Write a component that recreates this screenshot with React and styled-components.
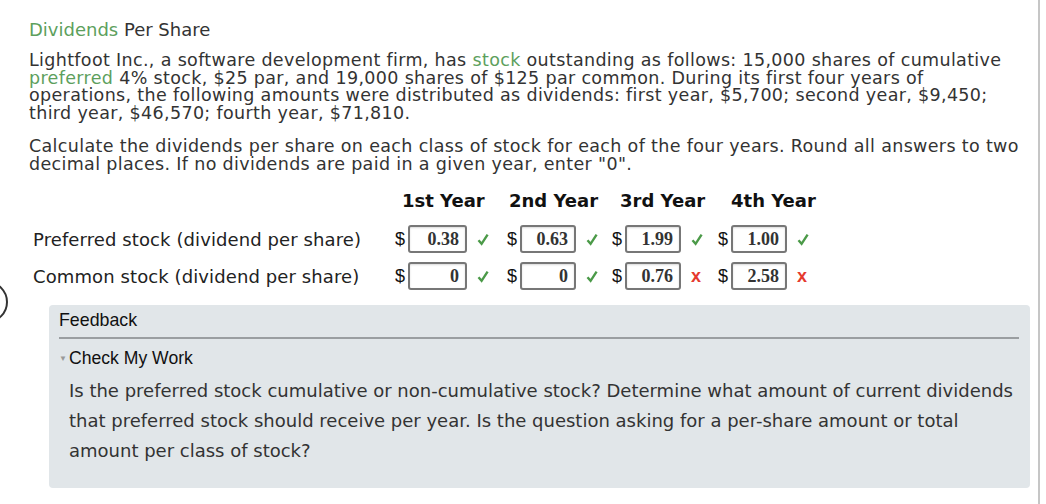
import styled, { createGlobalStyle } from 'styled-components'

const GlobalStyle = createGlobalStyle`
  body {
    margin: 0;
    background: #fff;
    font-family: "DejaVu Sans", Verdana, sans-serif;
  }
`

const Page = styled.div`
  position: relative;
  width: 1040px;
  height: 504px;
  border-right: 2px solid #c6c6c6;
  overflow: hidden;
  padding: 20px 0 0 29px;
  box-sizing: border-box;
  color: #333;
`

const Title = styled.div`
  font-size: 18px;
  line-height: 20px;
`

const Green = styled.span`
  color: #5d9f5d;
`

const Para = styled.p`
  margin: ${(p) => p.$top}px 0 0;
  font-size: 17.5px;
  line-height: 17.5px;
  letter-spacing: 0.34px;
  white-space: nowrap;
`

const Grid = styled.div`
  display: grid;
  grid-template-columns: 361px 112px 105px 106px 110px;
  margin: 16px 0 0 4px;
`

const HeadCell = styled.div`
  font-weight: bold;
  font-size: 18px;
  line-height: 24px;
  height: 24px;
  margin-bottom: 8px;
  padding-left: ${(p) => p.$pad}px;
  color: #111;
  white-space: nowrap;
`

const Label = styled.div`
  font-size: 18px;
  letter-spacing: 0.1px;
  height: 36px;
  margin-bottom: 1px;
  display: flex;
  align-items: center;
  color: #222;
`

const Cell = styled.div`
  display: flex;
  align-items: center;
  height: 36px;
  margin-bottom: 1px;
  padding-left: 1px;
`

const Dollar = styled.span`
  font-family: "Liberation Sans", Arial, sans-serif;
  font-size: 18px;
  color: #111;
  width: 12px;
`

const Input = styled.div`
  width: ${(p) => p.$w}px;
  height: 28px;
  box-sizing: border-box;
  border: 2px solid #777;
  border-radius: 3px;
  box-shadow: inset 0 1px 2px rgba(0, 0, 0, 0.15);
  margin-left: 1px;
  padding-right: 6px;
  display: flex;
  align-items: center;
  justify-content: flex-end;
  font-family: "Liberation Serif", "Times New Roman", serif;
  font-weight: bold;
  font-size: 18px;
  color: #333;
`

const MarkBox = styled.span`
  margin-left: 10px;
  width: 14px;
  display: flex;
  align-items: center;
`

const Cross = styled.span`
  font-family: "Liberation Sans", Arial, sans-serif;
  font-weight: bold;
  font-size: 18px;
  line-height: 18px;
  color: #e53a2e;
`

const Arc = styled.svg`
  position: absolute;
  left: 0;
  top: 280px;
`

const Feedback = styled.div`
  margin: 10px 0 0 20px;
  width: 981px;
  height: 183px;
  box-sizing: border-box;
  background: #e1e6e9;
  border-radius: 4px;
  padding: 5px 11px 0 10px;
`

const FeedHead = styled.div`
  font-family: "Liberation Sans", Arial, sans-serif;
  font-size: 17.8px;
  line-height: 20px;
  color: #111;
  padding-bottom: 7px;
  border-bottom: 2px solid #9a9ea1;
`

const Toggle = styled.div`
  font-family: "Liberation Sans", Arial, sans-serif;
  font-size: 17.6px;
  line-height: 20px;
  color: #111;
  margin-top: 8px;
  display: flex;
  align-items: center;
`

const Caret = styled.span`
  font-size: 8px;
  color: #999;
  width: 10px;
  margin-top: 2px;
`

const Hint = styled.div`
  margin: 7px 0 0 10px;
  font-size: 18px;
  line-height: 30px;
  white-space: nowrap;
  color: #333;
`

const years = [
  ['1st Year', 8],
  ['2nd Year', 3],
  ['3rd Year', 9],
  ['4th Year', 14],
]
const rows = [
  {
    label: 'Preferred stock (dividend per share)',
    cells: [['0.38', true], ['0.63', true], ['1.99', true], ['1.00', true]],
  },
  {
    label: 'Common stock (dividend per share)',
    cells: [['0', true], ['0', true], ['0.76', false], ['2.58', false]],
  },
]
const widths = [59, 56, 56, 56]

function Mark({ ok }) {
  return (
    <MarkBox>
      {ok ? (
        <svg width="12" height="13" viewBox="0 0 12 13">
          <path d="M1.5 7.2 L4.6 10.8 L10.6 1.6" fill="none" stroke="#4b9a48" strokeWidth="2.4" />
        </svg>
      ) : (
        <Cross>x</Cross>
      )}
    </MarkBox>
  )
}

function App() {
  return (
    <Page>
      <GlobalStyle />
      <Arc width="10" height="44" viewBox="0 0 10 44">
        <circle cx="-13" cy="22" r="20" fill="none" stroke="#333" strokeWidth="2" />
      </Arc>
      <Title>
        <Green>Dividends</Green> Per Share
      </Title>
      <Para $top={12}>
        Lightfoot Inc., a software development firm, has <Green>stock</Green> outstanding as follows: 15,000 shares of cumulative
        <br />
        <Green>preferred</Green> 4% stock, $25 par, and 19,000 shares of $125 par common. During its first four years of
        <br />
        operations, the following amounts were distributed as dividends: first year, $5,700; second year, $9,450;
        <br />
        third year, $46,570; fourth year, $71,810.
      </Para>
      <Para $top={16}>
        Calculate the dividends per share on each class of stock for each of the four years. Round all answers to two
        <br />
        decimal places. If no dividends are paid in a given year, enter "0".
      </Para>
      <Grid>
        <div />
        {years.map(([y, pad]) => (
          <HeadCell key={y} $pad={pad}>
            {y}
          </HeadCell>
        ))}
        {rows.map((r) => [
          <Label key={r.label}>{r.label}</Label>,
          ...r.cells.map(([v, ok], i) => (
            <Cell key={r.label + i}>
              <Dollar>$</Dollar>
              <Input $w={widths[i]}>{v}</Input>
              <Mark ok={ok} />
            </Cell>
          )),
        ])}
      </Grid>
      <Feedback>
        <FeedHead>Feedback</FeedHead>
        <Toggle>
          <Caret>▼</Caret>Check My Work
        </Toggle>
        <Hint>
          Is the preferred stock cumulative or non-cumulative stock? Determine what amount of current dividends
          <br />
          that preferred stock should receive per year. Is the question asking for a per-share amount or total
          <br />
          amount per class of stock?
        </Hint>
      </Feedback>
    </Page>
  )
}

export default App
